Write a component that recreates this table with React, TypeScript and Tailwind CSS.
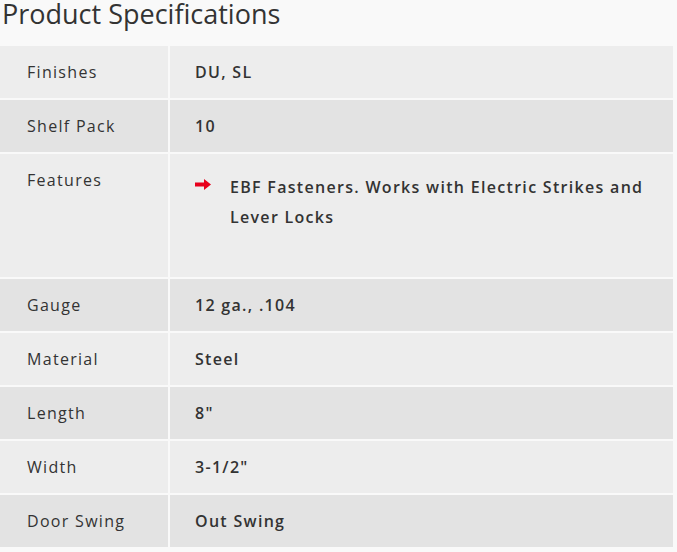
const specs: { label: string; value: string }[] = [
  { label: 'Finishes', value: 'DU, SL' },
  { label: 'Shelf Pack', value: '10' },
  { label: 'Features', value: '' },
  { label: 'Gauge', value: '12 ga., .104' },
  { label: 'Material', value: 'Steel' },
  { label: 'Length', value: '8"' },
  { label: 'Width', value: '3-1/2"' },
  { label: 'Door Swing', value: 'Out Swing' },
]

function Arrow() {
  return (
    <svg width="16" height="11" viewBox="0 0 16 11" className="shrink-0">
      <path d="M0 3.5h9V0l7 5.5-7 5.5V7.5H0z" fill="#e8001c" />
    </svg>
  )
}

export default function App() {
  return (
    <div
      className="h-[552px] w-[677px] overflow-hidden bg-[#f9f9f9] text-[#333]"
      style={{ fontFamily: '"Open Sans", sans-serif' }}
    >
      <h2 className="h-[46px] pl-[2px] text-[27px] leading-[28px] text-[#333]">Product Specifications</h2>
      <div className="flex w-[673px] flex-col gap-[2px]">
        {specs.map((row, i) => {
          const bg = i % 2 === 0 ? 'bg-[#ededed]' : 'bg-[#e3e3e3]'
          const features = row.label === 'Features'
          return (
            <div
              key={row.label}
              className={`grid grid-cols-[168px_1fr] gap-[2px] ${features ? 'h-[123px]' : 'h-[52px]'}`}
            >
              <div className={`${bg} pl-[27px] pt-[14px] text-[16px] leading-[24px] tracking-[1.3px]`}>
                {row.label}
              </div>
              <div className={`${bg} pl-[25px] pt-[14px] text-[16px] font-semibold leading-[24px] tracking-[1.3px]`}>
                {features ? (
                  <ul className="pt-[4px]">
                    <li className="flex items-start gap-[19px]">
                      <span className="pt-[7px]">
                        <Arrow />
                      </span>
                      <span className="leading-[30px]">
                        EBF Fasteners. Works with Electric Strikes and Lever Locks
                      </span>
                    </li>
                  </ul>
                ) : (
                  row.value
                )}
              </div>
            </div>
          )
        })}
      </div>
    </div>
  )
}
